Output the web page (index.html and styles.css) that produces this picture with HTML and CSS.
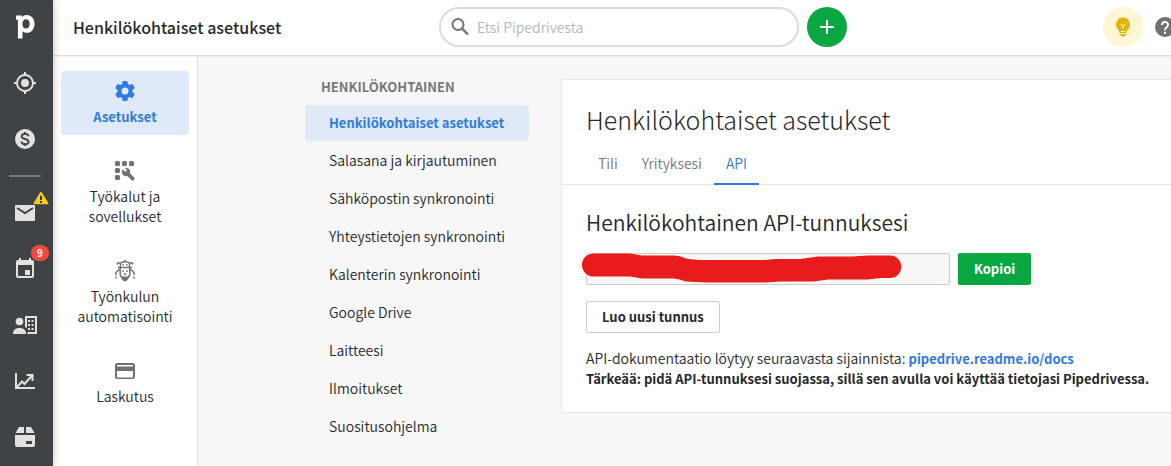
FILE: index.html
```html
<!DOCTYPE html>
<html lang="fi">
<head>
<meta charset="utf-8">
<title>Henkilökohtaiset asetukset</title>
<link rel="stylesheet" href="styles.css">
</head>
<body>
<div class="app">
  <nav class="rail" aria-label="Päävalikko">
    <a class="rail-item logo" href="#" aria-label="Pipedrive">
      <svg width="24" height="24" viewBox="0 0 24 24"><path fill="#fff" fill-rule="evenodd" d="M3 .5H9V2.300C10.200.8 11.700 0 13.700 0 18.500 0 21.500 3.700 21.500 8.900S18.300 17.700 13.700 17.700C11.900 17.700 10.500 17.100 9.500 16.200V23.500H4.900V4.800H3ZM13 4.300C10.900 4.300 9.400 5.800 9.400 8.900S10.900 13.400 13 13.400 16.700 11.700 16.700 8.900 15.100 4.300 13 4.300Z"/></svg>
    </a>
    <a class="rail-item" href="#" aria-label="Liidit">
      <svg width="24" height="24" viewBox="0 0 24 24"><path fill="#e1e3e3" d="M12 8a4 4 0 1 0 0 8 4 4 0 0 0 0-8zm8.940 3A8.990 8.990 0 0 0 13 3.060V1h-2v2.060A8.990 8.990 0 0 0 3.060 11H1v2h2.060A8.990 8.990 0 0 0 11 20.940V23h2v-2.060A8.990 8.990 0 0 0 20.940 13H23v-2h-2.060zM12 19a7 7 0 1 1 0-14 7 7 0 0 1 0 14z"/></svg>
    </a>
    <a class="rail-item" href="#" aria-label="Kaupat">
      <svg width="24" height="24" viewBox="0 0 24 24"><circle cx="12" cy="12" r="10" fill="#e1e3e3"/><path fill="none" stroke="#3f4346" stroke-width="1.900" d="M15.500 9.200C15.200 7.700 14 6.900 12.100 6.900 10 6.900 8.700 7.900 8.700 9.400 8.700 12.900 15.600 11 15.600 14.700 15.600 16.200 14.200 17.200 12.100 17.200 9.900 17.200 8.600 16.200 8.300 14.600M12 5V7.300M12 17V19"/></svg>
    </a>
    <div class="rail-divider"></div>
    <a class="rail-item" href="#" aria-label="Sähköposti">
      <svg width="24" height="24" viewBox="0 0 24 24"><rect x="2" y="4" width="20" height="16" rx="1" fill="#e1e3e3"/><path fill="none" stroke="#3f4346" stroke-width="2" d="M4 7l8 5 8-5"/></svg>
      <svg class="warning" width="16" height="14" viewBox="0 0 16 14"><path fill="#f8cb1c" stroke="#f8cb1c" stroke-width="1.500" stroke-linejoin="round" d="M8 1.500L14.700 12.500H1.300Z"/><path fill="#35393b" d="M7 4.800H9V9H7zM7 10H9V12H7z"/></svg>
    </a>
    <a class="rail-item" href="#" aria-label="Aktiviteetit">
      <svg width="24" height="24" viewBox="0 0 24 24"><path fill="#e1e3e3" d="M17 13h-5v5h5v-5zM16 1v2H8V1H6v2H5a2 2 0 0 0-2 2v14a2 2 0 0 0 2 2h14a2 2 0 0 0 2-2V5a2 2 0 0 0-2-2h-1V1h-2zm3 18H5V8h14v11z"/></svg>
      <span class="badge">9</span>
    </a>
    <a class="rail-item" href="#" aria-label="Yhteystiedot">
      <svg width="24" height="24" viewBox="0 0 24 24"><g fill="#e1e3e3"><circle cx="6.500" cy="8.500" r="3.800"/><path d="M0 21C0 16.800 2.800 15 6.500 15S13 16.800 13 21Z"/><path fill-rule="evenodd" d="M12 3H24V21H14.500V19H22V5H14V14.500H12Z"/><path d="M15 7h2v2h-2zm3.500 0h2v2h-2zM15 11h2v2h-2zm3.500 0h2v2h-2zM15 15h2v2h-2zm3.500 0h2v2h-2z"/></g></svg>
    </a>
    <a class="rail-item" href="#" aria-label="Raportit">
      <svg width="24" height="24" viewBox="0 0 24 24"><path fill="none" stroke="#e1e3e3" stroke-width="2" d="M3 4V19H22M4 18L9 12.500 11.500 15 19 6.500M13.500 6H19.500V12"/></svg>
    </a>
    <a class="rail-item" href="#" aria-label="Tuotteet">
      <svg width="24" height="24" viewBox="0 0 24 24"><path fill="#e1e3e3" fill-rule="evenodd" d="M6 2h5v6H2.500zM13 2h5l3.500 6H13zM2 10H22V20a2 2 0 0 1-2 2H4a2 2 0 0 1-2-2ZM13 16V19H19V16Z"/></svg>
    </a>
  </nav>
  <div class="main">
    <header class="topbar">
      <div class="topbar-title">Henkilökohtaiset asetukset</div>
      <label class="search">
        <svg width="24" height="24" viewBox="0 0 24 24"><circle cx="8" cy="9.500" r="5.500" fill="none" stroke="#6f7173" stroke-width="2"/><path d="M12 13.500L18 19.500" stroke="#6f7173" stroke-width="2.400"/></svg>
        <input type="search" placeholder="Etsi Pipedrivesta" aria-label="Etsi Pipedrivesta">
      </label>
      <button class="round add" type="button" aria-label="Lisää"><svg width="16" height="16" viewBox="0 0 16 16"><path d="M8 1V15M1 8H15" stroke="#fff" stroke-width="2"/></svg></button>
      <div class="topbar-tools">
        <button class="round tips" type="button" aria-label="Vinkit"><svg width="20" height="20" viewBox="0 0 20 20"><path fill="#dfb40b" d="M10 .5a7 7 0 0 0-4 12.700V15h8v-1.800A7 7 0 0 0 10 .5zM6.500 15h7v2.500h-1L12 19.500H8l-.5-2h-1z"/><path fill="none" stroke="#fff6cf" d="M7.500 7L10 9 12.500 7M10 9V12M7.500 14.500H12.500M7.500 16.500H12.500"/></svg></button>
        <button class="help" type="button" aria-label="Ohje"><svg width="20" height="20" viewBox="0 0 20 20"><circle cx="10" cy="10" r="10" fill="#6f7173"/><path fill="none" stroke="#fff" stroke-width="2" d="M7 8A3 3 0 1 1 11.800 10.200C10.600 11 10 11.500 10 13.200M10 14.800V16.800"/></svg></button>
      </div>
    </header>
    <div class="body">
      <nav class="sections" aria-label="Asetusosiot">
        <a class="section active" href="#">
          <svg width="24" height="24" viewBox="0 0 24 24"><path fill="#317ae2" d="M19.430 12.980c.04-.32.07-.64.07-.98s-.03-.66-.07-.98l2.110-1.650c.19-.15.24-.42.12-.64l-2-3.460c-.12-.22-.39-.3-.61-.22l-2.490 1c-.52-.4-1.080-.73-1.690-.98l-.38-2.650A.488.488 0 0 0 14 2h-4c-.25 0-.46.18-.49.42l-.38 2.650c-.61.25-1.170.59-1.690.98l-2.490-1c-.23-.09-.49 0-.61.22l-2 3.460c-.13.22-.07.49.12.64l2.110 1.650c-.04.32-.07.65-.07.98s.03.66.07.98l-2.110 1.650c-.19.15-.24.42-.12.64l2 3.460c.12.22.39.3.61.22l2.490-1c.52.4 1.080.73 1.690.98l.38 2.650c.03.24.24.42.49.42h4c.25 0 .46-.18.49-.42l.38-2.650c.61-.25 1.170-.59 1.690-.98l2.490 1c.23.09.49 0 .61-.22l2-3.460c.12-.22.07-.49-.12-.64l-2.110-1.650zM12 15.500a3.500 3.500 0 1 1 0-7 3.500 3.500 0 0 1 0 7z"/></svg>
          <span>Asetukset</span>
        </a>
        <a class="section" href="#">
          <svg width="24" height="24" viewBox="0 0 24 24"><g fill="#6f7173"><rect x="2" y="2" width="5" height="5" rx="1.500"/><rect x="9" y="2" width="5" height="5" rx="1.500"/><rect x="16" y="2" width="5" height="5" rx="1.500"/><rect x="2" y="9" width="5" height="5" rx="1.500"/><rect x="2" y="16" width="5" height="5" rx="1.500"/><path d="M9.600 10.200L12.300 12.800 14 11.100 11.400 8.900C13.700 8.200 16 9.200 17 11.300 17.400 12.400 17.300 13.300 17 14.300L22 19.400 19.500 22 14.500 17C12.300 17.800 10.200 16.800 9.200 14.800 8.500 13.300 8.700 11.600 9.600 10.200Z"/></g></svg>
          <span>Työkalut ja sovellukset</span>
        </a>
        <a class="section" href="#">
          <svg width="24" height="24" viewBox="0 0 24 24"><g fill="none" stroke="#6f7173" stroke-width="1.500"><path d="M12 1V3M4.500 5.500V4H7M19.500 5.500V4H17M7.500 8V5C7.500 3.500 9 2.800 12 2.800S16.500 3.500 16.500 5V8M5 8.500H19M7.200 9V16L10 20.500 12 21.800 14 20.500 16.800 16V9M6.500 11H5.500L3 13.500V16M17.500 11H18.500L21 13.500V16M3 17.500V19.500M21 17.500V19.500"/></g><path fill="#6f7173" d="M9.500 5h1.500v1.500H9.500zm3.500 0h1.500v1.500H13zM9 11.500h2v1.200H9zm4 0h2v1.200h-2zM10.500 14.500h3v1.200h-3zM8.500 17.500h7L12 22z"/></svg>
          <span>Työnkulun automatisointi</span>
        </a>
        <a class="section" href="#">
          <svg width="24" height="24" viewBox="0 0 24 24"><path fill="#6f7173" d="M20 4H4a2 2 0 0 0-2 2v12a2 2 0 0 0 2 2h16a2 2 0 0 0 2-2V6a2 2 0 0 0-2-2zm0 14.500H4V12h16v6.500zm0-11H4V6h16v1.500z"/></svg>
          <span>Laskutus</span>
        </a>
      </nav>
      <nav class="submenu" aria-labelledby="submenu-title">
        <div class="submenu-title" id="submenu-title">HENKILÖKOHTAINEN</div>
        <a class="active" href="#">Henkilökohtaiset asetukset</a>
        <a href="#">Salasana ja kirjautuminen</a>
        <a href="#">Sähköpostin synkronointi</a>
        <a href="#">Yhteystietojen synkronointi</a>
        <a href="#">Kalenterin synkronointi</a>
        <a href="#">Google Drive</a>
        <a href="#">Laitteesi</a>
        <a href="#">Ilmoitukset</a>
        <a href="#">Suositusohjelma</a>
      </nav>
      <main class="card">
        <h1>Henkilökohtaiset asetukset</h1>
        <div class="tabs">
          <a href="#">Tili</a>
          <a href="#">Yrityksesi</a>
          <a class="active" href="#">API</a>
        </div>
        <section class="content">
          <h2 id="token-title">Henkilökohtainen API-tunnuksesi</h2>
          <div class="token-row">
            <div class="token">
              <input type="text" readonly aria-labelledby="token-title">
              <svg class="redaction" width="320" height="30" viewBox="0 0 320 30"><path fill="#e81c1c" d="M11.500.5H48L60 2.500H92Q97 2.500 104 5.500 112 7 126 7H182L194 6H218L236 3.500H270L286 2.500H308A11.200 11.200 0 0 1 308 25H298L286 26.500H246L232 28.500H198L184 29.500H126Q112 29 104 28.500 97 26 92 25.500H60L48 23.500H11.500A11.500 11.500 0 0 1 11.500.5Z"/></svg>
            </div>
            <button class="btn primary" type="button">Kopioi</button>
          </div>
          <button class="btn" type="button">Luo uusi tunnus</button>
          <p>API-dokumentaatio löytyy seuraavasta sijainnista: <a href="#">pipedrive.readme.io/docs</a><br><strong>Tärkeää: pidä API-tunnuksesi suojassa, sillä sen avulla voi käyttää tietojasi Pipedrivessa.</strong></p>
        </section>
      </main>
    </div>
  </div>
</div>
</body>
</html>
```

FILE: styles.css
```css
* { box-sizing: border-box; }

body {
  margin: 0;
  overflow: hidden;
  background: #f7f7f7;
  color: #26292c;
  font: 350 14px/20px "Noto Sans CJK SC", "Noto Sans", sans-serif;
}

a { color: inherit; text-decoration: none; }
button, input { font: inherit; color: inherit; }
svg { display: block; flex: none; }

.app { display: flex; min-height: 100vh; }

/* Dark icon rail */
.rail {
  flex: none;
  width: 53px;
  background: #3f4346;
  box-shadow: 0 0 8px rgba(38, 41, 44, 0.3);
  z-index: 2;
}
.rail-item {
  position: relative;
  display: flex;
  align-items: center;
  justify-content: center;
  height: 56px;
  padding-right: 4px;
}
.rail-item.logo { height: 55px; padding-bottom: 2px; }
.rail-divider {
  height: 2px;
  margin: 8px 12px 8px 9px;
  border-radius: 1px;
  background: #75797b;
}
.warning { position: absolute; top: 6px; left: 33px; }
.badge {
  position: absolute;
  top: 4px;
  left: 31px;
  width: 18px;
  border-radius: 8px;
  background: #f5493d;
  color: #fff;
  font-size: 10px;
  font-weight: 700;
  line-height: 16px;
  text-align: center;
}

.main { flex: 1; min-width: 0; display: flex; flex-direction: column; }

/* Top bar */
.topbar {
  display: flex;
  align-items: center;
  height: 56px;
  padding-left: 20px;
  padding-bottom: 1px;
  border-bottom: 1px solid #dfe0e0;
  background: #fff;
  box-shadow: 0 1px 1px rgba(38, 41, 44, 0.06);
  z-index: 1;
}
.topbar-title { flex: none; width: 366px; font-size: 16px; font-weight: 500; }
.search {
  display: flex;
  align-items: center;
  gap: 3px;
  width: 360px;
  height: 40px;
  padding: 0 9px;
  border: 2px solid #dcdddd;
  border-radius: 20px;
}
.search input {
  flex: 1;
  min-width: 0;
  padding: 0;
  border: 0;
  outline: 0;
  background: none;
}
.search input::placeholder { color: #b4b6b7; opacity: 1; }
.round {
  display: grid;
  place-items: center;
  flex: none;
  width: 40px;
  height: 40px;
  padding: 0;
  border: 0;
  border-radius: 50%;
}
.add { margin-left: 8px; background: #08a742; }
.tips { background: #fff6d6; }
.topbar-tools {
  display: flex;
  align-items: center;
  gap: 12px;
  margin-left: auto;
  margin-right: -4px;
}
.help { padding: 0; border: 0; background: none; }

.body { flex: 1; display: flex; align-items: flex-start; }

/* Settings sections */
.sections {
  align-self: stretch;
  display: flex;
  flex-direction: column;
  gap: 16px;
  flex: none;
  width: 145px;
  padding: 15px 8px;
  border-right: 1px solid #e5e5e5;
  background: #fff;
}
.section {
  display: flex;
  flex-direction: column;
  align-items: center;
  gap: 3px;
  padding: 8px 12px 9px;
  border-radius: 4px;
  text-align: center;
}
.active { color: #317ae2; }
.section.active, .submenu .active {
  background: #dfe9f8;
  font-size: 13px;
  font-weight: 700;
}
.section.active { gap: 4px; padding-bottom: 8px; }

/* Submenu */
.submenu {
  display: flex;
  flex-direction: column;
  gap: 2px;
  flex: none;
  width: 224px;
  margin: 21px 32px 20px 107px;
  white-space: nowrap;
}
.submenu-title {
  padding: 0 16px;
  margin-bottom: 6px;
  color: #76787a;
  font-size: 13px;
  font-weight: 700;
}
.submenu a { padding: 7px 24px 9px; border-radius: 4px; }
.submenu .active { padding: 8px 24px; }

/* Settings card */
.card {
  flex: 1;
  min-width: 0;
  margin: 23px -8px 0 0;
  border: 1px solid #e5e5e5;
  border-radius: 2px;
  background: #fff;
}
h1, h2 { margin: 0; font-weight: inherit; }
h1 { padding: 23px 24px 0; font-size: 25px; font-weight: 300; line-height: 32px; }
h2 { font-size: 21px; line-height: 28px; }
.tabs {
  display: flex;
  padding: 8px 24px 0;
  border-bottom: 1px solid #e5e5e5;
  color: #76787a;
}
.tabs a { padding: 10px 12px; margin-bottom: -1px; border-bottom: 2px solid transparent; }
.tabs .active { border-color: #317ae2; color: #317ae2; }
.content { padding: 23px 24px 24px; }
.token-row { display: flex; gap: 8px; margin: 17px 0 16px; }
.token { position: relative; width: 364px; }
.token input {
  display: block;
  width: 100%;
  height: 32px;
  border: 1px solid #cbcccd;
  border-radius: 2px;
  background: #f7f7f7;
}
.redaction { position: absolute; top: 0; left: -4px; }
.btn {
  height: 32px;
  padding: 0 15px;
  border: 1px solid #cbcccd;
  border-radius: 2px;
  background: #fff;
  font-size: 13px;
  font-weight: 700;
}
.btn.primary { border-color: #08a742; background: #08a742; color: #fff; }
p { margin: 15px 0 0; white-space: nowrap; }
p a, strong { font-size: 13px; font-weight: 700; line-height: 16px; }
p a { color: #317ae2; }
```
